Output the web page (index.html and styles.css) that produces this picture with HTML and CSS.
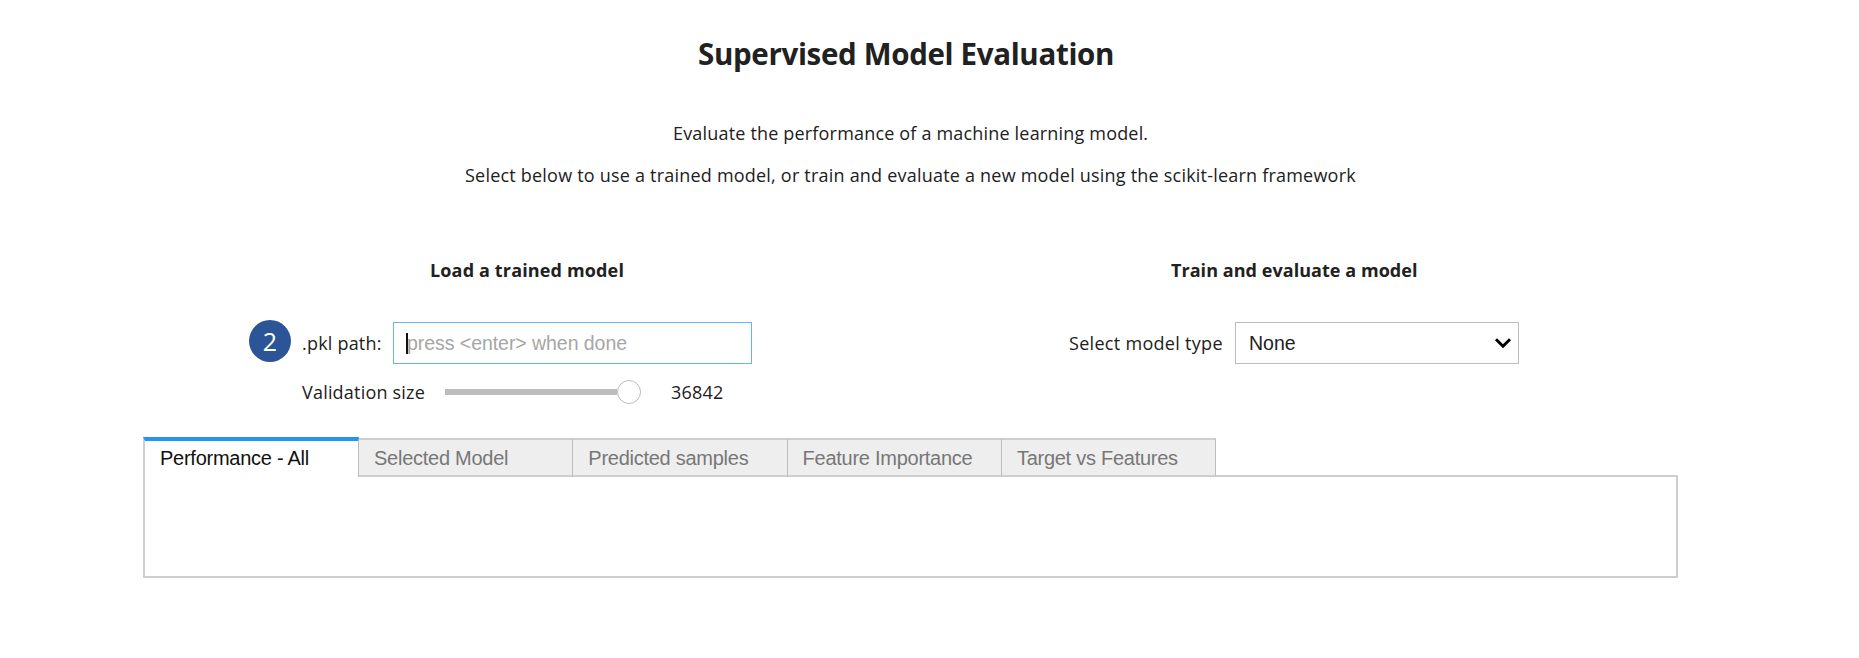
FILE: index.html
```html
<!DOCTYPE html>
<html lang="en">
<head>
<meta charset="utf-8">
<title>Supervised Model Evaluation</title>
<link rel="stylesheet" href="styles.css">
</head>
<body>
<main class="page">
  <header class="intro">
    <h1 class="title">Supervised Model Evaluation</h1>
    <p class="lead lead-a">Evaluate the performance of a machine learning model.</p>
    <p class="lead lead-b">Select below to use a trained model, or train and evaluate a new model using the scikit-learn framework</p>
  </header>
  <div class="columns">
    <section class="load">
      <h2 class="heading heading-load">Load a trained model</h2>
      <div class="row path-row">
        <span class="badge">2</span>
        <label class="label label-path">.pkl path:</label>
        <div class="field field-focus"><i class="caret"></i><span class="placeholder">press &lt;enter&gt; when done</span></div>
      </div>
      <div class="row size-row">
        <span class="label label-size">Validation size</span>
        <div class="slider"><i class="track"></i><i class="knob"></i></div>
        <span class="label label-value">36842</span>
      </div>
    </section>
    <section class="train">
      <h2 class="heading heading-train">Train and evaluate a model</h2>
      <div class="row">
        <span class="label label-type">Select model type</span>
        <div class="field select"><span class="none">None</span>
          <svg class="chevron" viewBox="0 0 18 12"><path d="M2 2.2 9 9.2 16 2.2"/></svg>
        </div>
      </div>
    </section>
  </div>
  <div class="tabs">
    <div class="tab active">Performance - All</div>
    <div class="tab">Selected Model</div>
    <div class="tab">Predicted samples</div>
    <div class="tab">Feature Importance</div>
    <div class="tab">Target vs Features</div>
  </div>
  <div class="panel"></div>
</main>
</body>
</html>
```
FILE: styles.css
```css
* { box-sizing: border-box; }
body { margin: 0; background: #fff; color: #212121; font-family: "Open Sans", "Noto Sans", sans-serif; font-size: 18px; }
.page { width: 1859px; }
.intro { display: flex; flex-direction: column; }
.title { margin: 34px 0 0 698px; font-size: 29.5px; line-height: 40px; font-weight: 700; letter-spacing: -0.33px; white-space: nowrap; }
.lead { margin: 0; line-height: 42px; white-space: nowrap; }
.lead-a { margin: 38px 0 0 673px; letter-spacing: 0.18px; }
.lead-b { margin-left: 465px; letter-spacing: 0.21px; }
.columns { display: flex; height: 241px; padding-top: 59px; }
.load { width: 1069px; }
.heading { margin: 0; font-size: 18px; line-height: 30px; font-weight: 700; white-space: nowrap; }
.heading-load { padding-left: 430px; letter-spacing: 0.15px; }
.heading-train { padding-left: 102px; letter-spacing: 0.05px; }
.row { display: flex; align-items: center; height: 42px; margin-top: 37px; white-space: nowrap; }
.path-row { padding-left: 249px; }
.size-row { margin-top: 7px; padding-left: 302px; }
.badge { width: 42px; height: 42px; margin-top: -4px; border-radius: 50%; background: #2b5597; color: #fff; font-size: 25px; font-weight: 500; line-height: 42px; text-align: center; }
.label { letter-spacing: 0.2px; }
.label-path { width: 91px; margin-left: 11px; }
.label-size { width: 143px; }
.label-value { margin-left: 30px; }
.label-type { width: 166px; letter-spacing: 0.3px; }
.field { display: flex; align-items: center; height: 42px; border: 1px solid #64b5f6; padding-left: 12px; font-family: "Liberation Sans", Arial, sans-serif; font-size: 19.5px; }
.field-focus { width: 359px; letter-spacing: -0.05px; }
.caret { width: 2px; height: 21px; background: #111; margin-right: -1px; z-index: 1; }
.placeholder { color: #a6a6a6; }
.select { width: 284px; border-color: #bdbdbd; justify-content: space-between; padding: 0 6px 0 13px; }
.chevron { width: 18px; height: 12px; fill: none; stroke: #000; stroke-width: 3; }
.slider { display: flex; align-items: center; width: 196px; }
.track { width: 172px; height: 6px; background: #bdbdbd; }
.knob { width: 24px; height: 24px; border: 1px solid #bdbdbd; border-radius: 50%; background: #fff; }
.tabs { position: relative; z-index: 1; display: flex; height: 40px; margin-left: 143px; font-family: "Liberation Sans", Arial, sans-serif; font-size: 20px; letter-spacing: -0.26px; }
.tab { width: 214.3px; height: 39px; margin-top: 1px; padding-left: 15px; border: solid #cecece; border-width: 2px 1px 2px 0; border-right-color: #bdbdbd; background: #eee; color: #777; line-height: 36px; white-space: nowrap; }
.tab.active { width: 216px; height: 40px; margin-top: 0; border-left-width: 2px; border-top: 4px solid #2196f3; border-bottom: 0; background: #fff; color: #111; line-height: 35px; }
.panel { width: 1535px; height: 103px; margin: -2px 0 0 143px; border: 2px solid #cecece; }
```
